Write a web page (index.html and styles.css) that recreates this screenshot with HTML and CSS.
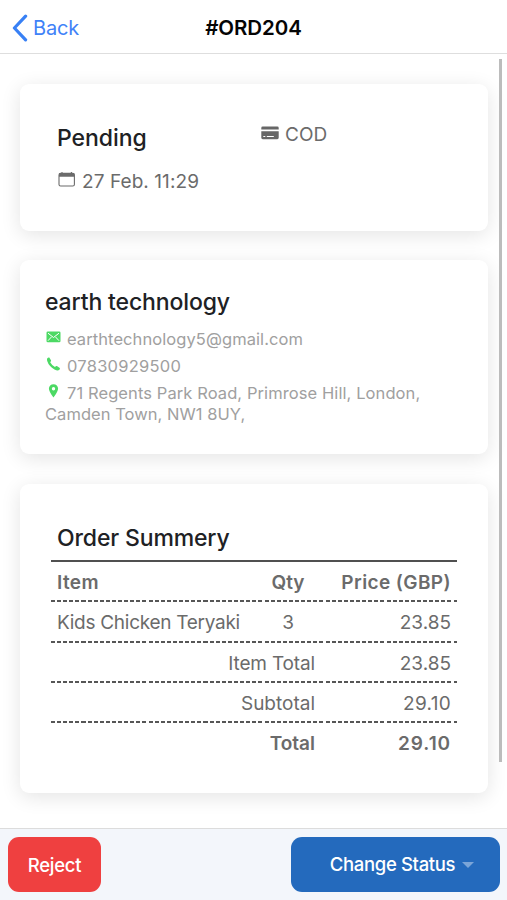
FILE: index.html
```html
<!DOCTYPE html>
<html lang="en">
<head>
<meta charset="utf-8">
<title>#ORD204</title>
<link rel="stylesheet" href="styles.css">
</head>
<body>
<header class="navbar">
  <a class="back"><svg class="chevron" viewBox="0 0 16 28"><path d="M13.6 2.2 2.4 14l11.2 11.8"/></svg><span class="back-label">Back</span></a>
  <h1 class="title"><span>#ORD204</span></h1>
</header>
<main class="content">
  <section class="card status-card">
    <div class="status-main">
      <h2 class="heading pending"><span>Pending</span></h2>
      <p class="meta"><svg class="calendar" viewBox="0 0 18 16"><rect x="1" y="2.4" width="15.4" height="12.6" rx="1.6"/><path class="solid" d="M1 5.8V3.5Q1 2 2.5 2H15q1.500 0 1.500 1.500v2.300z"/><path d="M4 1v2M13.400 1v2"/></svg><span class="date">27 Feb. 11:29</span></p>
    </div>
    <p class="meta payment"><svg class="credit" viewBox="0 0 18 14"><path d="M.3 3.500V2Q.3.6 1.700.6h14.600q1.400 0 1.400 1.400v1.500z"/><path fill-rule="evenodd" d="M.3 5.200h17.400v6.600q0 1.400-1.400 1.400H1.700Q.3 13.200.3 11.800zM2.300 9.900v1.200h2V9.900zm3.500 0v1.200h7V9.900z"/></svg><span class="cod">COD</span></p>
  </section>
  <section class="card customer-card">
    <h2 class="heading customer"><span>earth technology</span></h2>
    <p class="contact"><svg class="pin" viewBox="0 0 15 16"><rect x=".5" y="2.400" width="14" height="10.800" rx="1.300"/><path class="cut" d="m2 4.200 5.500 4.300L13 4.200M2 11.700l3.600-3.900M13 11.700 9.400 7.800"/></svg><span class="mail">earthtechnology5@gmail.com</span></p>
    <p class="contact"><svg class="pin" viewBox="0 0 15 16"><path d="M1.300 2.300Q2.300 1.100 3.300 1.600L5.100 4.500Q5.200 5.300 4.200 6.300 5.600 9.200 9 10.900q1.100-1.100 1.900-.8l2.900 1.900q.6 1-.7 2-1.600 1-4.600-.6Q2.900 10.400 1.200 5.100.7 3.200 1.300 2.300z"/></svg><span class="phone">07830929500</span></p>
    <p class="contact"><svg class="pin" viewBox="0 0 15 16"><path fill-rule="evenodd" d="M7.500 1.200C4.800 1.200 2.900 3.100 2.900 5.600c0 3.300 4.600 9 4.600 9s4.600-5.700 4.600-9c0-2.500-1.900-4.400-4.600-4.400zm0 2.900a1.700 1.700 0 1 1 0 3.400 1.700 1.700 0 0 1 0-3.400z"/></svg><span class="addr">71 Regents Park Road, Primrose Hill, London,</span><br><span class="addr2">Camden Town, NW1 8UY,</span></p>
  </section>
  <section class="card order-card">
    <h2 class="heading summary"><span>Order Summery</span></h2>
    <div class="row head"><span class="item-h">Item</span><span class="qty">Qty</span><span class="price price-h">Price (GBP)</span></div>
    <div class="row"><span class="item">Kids Chicken Teryaki</span><span class="qty">3</span><span class="price">23.85</span></div>
    <div class="row sum"><span class="label item-total">Item Total</span><span class="price">23.85</span></div>
    <div class="row sum"><span class="label">Subtotal</span><span class="price price-sub">29.10</span></div>
    <div class="row sum total"><span class="label">Total</span><span class="price price-total">29.10</span></div>
  </section>
  <div class="scrollbar"></div>
</main>
<footer class="toolbar">
  <button class="btn reject"><span>Reject</span></button>
  <button class="btn change"><span>Change Status</span><svg class="caret" viewBox="0 0 12 6"><path d="M0 0h12L6 6z"/></svg></button>
</footer>
</body>
</html>
```
FILE: styles.css
```css
* { box-sizing: border-box; }
body { margin: 0; height: 900px; display: flex; flex-direction: column; overflow: hidden; background: #fff; color: #6b6b6b; font-family: Inter, "Liberation Sans", sans-serif; }
h1, h2, p { margin: 0; }
svg { flex: none; }
.navbar { height: 54px; flex: none; display: grid; grid-template-columns: 1fr auto 1fr; align-items: center; border-bottom: 1px solid #dedede; padding: 2px 12px 0; }
.back { display: flex; align-items: center; gap: 5px; color: #3f82f8; font-size: 20px; letter-spacing: -0.15px; }
.chevron { width: 16px; height: 28px; fill: none; stroke: #3880f5; stroke-width: 3.2; stroke-linecap: round; stroke-linejoin: round; }
.title { color: #050505; font-size: 20.500px; font-weight: 600; letter-spacing: -0.05px; line-height: 28px; }
.content { position: relative; height: 774px; flex: none; padding: 30px 19px 0 20px; display: flex; flex-direction: column; overflow: hidden; }
.card { background: #fff; border-radius: 9px; box-shadow: 0 4px 20px rgba(0, 0, 0, .11); flex: none; }
.heading { color: #202124; font-size: 23px; font-weight: 500; line-height: 30px; }
.status-card { height: 147px; padding: 39px 37px 0; display: grid; grid-template-columns: 203px 1fr; margin-bottom: 29px; }
.pending { letter-spacing: -0.05px; }
.meta { display: flex; align-items: center; font-size: 19px; line-height: 28px; }
.status-main .meta { margin-top: 15px; }
.calendar { width: 18px; height: 16px; margin: -6px 6px 0 1px; fill: none; stroke: #6b6b6b; stroke-width: 1.1; }
.calendar .solid { fill: #6b6b6b; stroke: none; }
.date { letter-spacing: 0.08px; }
.payment { height: 28px; margin-top: -2px; }
.credit { width: 18px; height: 14px; margin: -5px 6px 0 1px; fill: #666; }
.customer-card { height: 194px; padding: 27px 25px 0; margin-bottom: 30px; }
.customer { margin-bottom: 12px; letter-spacing: -0.13px; }
.contact { color: #a0a0a0; font-size: 16.500px; line-height: 21px; margin-bottom: 6px; white-space: nowrap; }
.pin { width: 15px; height: 16px; margin: 0 6px 0 1px; vertical-align: 0; fill: #4cd964; }
.pin .cut { fill: none; stroke: #fff; stroke-width: 1; }
.mail { letter-spacing: 0.08px; }
.phone { letter-spacing: 0.25px; }
.addr { letter-spacing: 0.09px; }
.addr2 { letter-spacing: 0.04px; }
.order-card { height: 309px; padding: 39px 31px 0; }
.summary { height: 39px; padding-left: 6px; border-bottom: 2px solid #505050; letter-spacing: -0.14px; }
.row { height: 40.300px; display: grid; grid-template-columns: 1fr 70px 128px; padding: 0 6px; font-size: 19px; line-height: 41px; white-space: nowrap; background: repeating-linear-gradient(90deg, #565656 0 4px, transparent 4px 6.100px) bottom / 100% 2px no-repeat; }
.qty { text-align: center; }
.price, .label { text-align: right; }
.item { letter-spacing: -0.28px; }
.item-h { letter-spacing: 0.4px; }
.item-total { letter-spacing: -0.15px; }
.price-h { letter-spacing: 0.4px; }
.price-sub { letter-spacing: 0.3px; }
.price-total { letter-spacing: 0.9px; }
.sum { grid-template-columns: 258px 1fr; }
.head, .total { font-weight: 600; }
.total { background: none; }
.scrollbar { position: absolute; left: 499px; top: 5px; width: 3px; height: 703px; background: #bcbcbc; }
.toolbar { height: 72px; flex: none; border-top: 1px solid #dcdcdc; background: #f3f6fb; display: flex; justify-content: space-between; padding: 8px 7.500px 0 8px; }
.btn { height: 55px; border: 0; border-radius: 11px; color: #fff; font: 500 18.500px/55px Inter, "Liberation Sans", sans-serif; display: flex; align-items: center; justify-content: center; padding: 0; }
.reject { width: 93px; background: #ef4040; letter-spacing: -0.3px; padding-top: 1px; }
.change { width: 209px; background: #246abd; gap: 7px; letter-spacing: -0.35px; padding-left: 14px; }
.caret { width: 12px; height: 6px; fill: #7ba5d8; }
```
